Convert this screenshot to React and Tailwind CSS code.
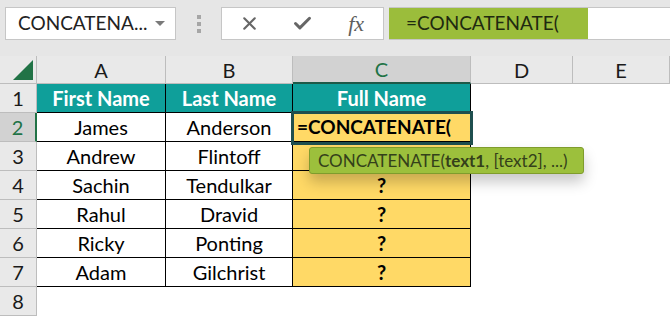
import { X, Check } from "lucide-react";

const cols = [
  { key: "A", w: "w-[129px]" },
  { key: "B", w: "w-[127px]" },
  { key: "C", w: "w-[178px]" },
  { key: "D", w: "w-[102px]" },
  { key: "E", w: "flex-1" },
];

const people = [
  ["James", "Anderson"],
  ["Andrew", "Flintoff"],
  ["Sachin", "Tendulkar"],
  ["Rahul", "Dravid"],
  ["Ricky", "Ponting"],
  ["Adam", "Gilchrist"],
];

function FormulaBar() {
  return (
    <div className="flex h-[56px] items-start bg-[#e6e6e6] pt-[7px]">
      <div className="ml-[5px] flex h-[33px] w-[171px] items-center justify-between border border-[#c6c6c6] bg-white pl-[12px] pr-[10px] text-[19px] text-[#222]">
        <span>CONCATENA...</span>
        <span className="h-0 w-0 border-x-[5px] border-t-[5px] border-x-transparent border-t-[#7a7a7a]" />
      </div>
      <div className="flex h-[33px] w-[45px] flex-col items-center justify-center gap-[3px]">
        <span className="h-[4px] w-[4px] bg-[#a6a6a6]" />
        <span className="h-[4px] w-[4px] bg-[#a6a6a6]" />
        <span className="h-[4px] w-[4px] bg-[#a6a6a6]" />
      </div>
      <div className="flex h-[33px] w-[163px] items-center border border-[#c6c6c6] bg-white text-[#666]">
        <div className="flex w-[54px] justify-center pl-[2px]">
          <X size={21} strokeWidth={2.4} />
        </div>
        <div className="flex w-[54px] justify-center">
          <Check size={21} strokeWidth={3.4} />
        </div>
        <div className="flex w-[54px] justify-center font-['Liberation_Serif',serif] text-[22px] italic text-[#5e5e5e]">
          fx
        </div>
      </div>
      <div className="ml-[5px] flex h-[33px] flex-1 border-y border-[#c6c6c6] bg-white">
        <div className="flex h-full w-[199px] items-center bg-[#9bbd3b] pl-[17px] text-[19px] text-[#1f2a10]">
          =CONCATENATE(
        </div>
      </div>
    </div>
  );
}

function ColumnHeaders() {
  return (
    <div className="flex h-[28px] bg-[#e9e9e9] text-[20px] text-[#1a1a1a]">
      <div className="relative w-[37px] border-r border-b border-[#bdbdbd]">
        <span className="absolute right-[3px] bottom-[3px] h-0 w-0 border-b-[20px] border-l-[20px] border-l-transparent border-b-[#217346]" />
      </div>
      {cols.map((c) =>
        c.key === "C" ? (
          <div
            key={c.key}
            className={`${c.w} flex items-center justify-center border-r border-b-2 border-r-[#bdbdbd] border-b-[#1d5a48] bg-[#d2d2d2] text-[#217346]`}
          >
            {c.key}
          </div>
        ) : (
          <div
            key={c.key}
            className={`${c.w} flex items-center justify-center border-r border-b border-[#bdbdbd]`}
          >
            {c.key}
          </div>
        )
      )}
    </div>
  );
}

function RowHeader({ n, active }) {
  return active ? (
    <div className="flex w-[37px] items-center justify-center border-r-2 border-b border-r-[#217346] border-b-[#bdbdbd] bg-[#d2d2d2] text-[#217346]">
      {n}
    </div>
  ) : (
    <div className="flex w-[37px] items-center justify-center border-r border-b border-[#bdbdbd] bg-[#e9e9e9] text-[#1a1a1a]">
      {n}
    </div>
  );
}

function Sheet() {
  return (
    <div className="text-[20px] text-black">
      <ColumnHeaders />
      <div className="flex h-[29px]">
        <RowHeader n={1} />
        <div className="flex w-[129px] items-center justify-center border-r border-b border-black bg-[#0f9f9a] font-bold text-white">
          First Name
        </div>
        <div className="flex w-[127px] items-center justify-center border-r border-b border-black bg-[#0f9f9a] font-bold text-white">
          Last Name
        </div>
        <div className="flex w-[178px] items-center justify-center border-r border-b border-black bg-[#0f9f9a] font-bold text-white">
          Full Name
        </div>
        <div className="flex-1" />
      </div>
      {people.map(([first, last], i) => (
        <div key={first} className="flex h-[29px]">
          <RowHeader n={i + 2} active={i === 0} />
          <div className="flex w-[129px] items-center justify-center border-r border-b border-black">
            {first}
          </div>
          <div className="flex w-[127px] items-center justify-center border-r border-b border-black">
            {last}
          </div>
          {i === 0 ? (
            <div className="relative flex w-[178px] items-center border-r border-b border-black bg-[#ffd966] pl-[4px] text-[19px] font-bold">
              =CONCATENATE(
              <span className="absolute -top-[2px] -left-[2px] h-[34px] w-[182px] border-[3px] border-[#1f4f4f]" />
              <div className="absolute top-[34px] left-[16px] z-10 flex h-[27px] w-[275px] items-center rounded-[3px] border border-[#7f9c2c] bg-[#9cc03c] pl-[8px] text-[17px] font-normal text-[#34401a] shadow-[0_8px_14px_rgba(0,0,0,0.22)]">
                CONCATENATE(<b className="font-bold">text1</b>, [text2], ...)
              </div>
            </div>
          ) : (
            <div className="flex w-[178px] items-center justify-center border-r border-b border-black bg-[#ffd966] font-bold">
              {i === 1 ? "" : "?"}
            </div>
          )}
          <div className="flex-1" />
        </div>
      ))}
      <div className="flex h-[29px]">
        <RowHeader n={8} />
        <div className="flex-1" />
      </div>
    </div>
  );
}

export default function App() {
  return (
    <div className="h-[316px] w-[670px] overflow-hidden bg-white font-['Lato',sans-serif]">
      <FormulaBar />
      <Sheet />
    </div>
  );
}
